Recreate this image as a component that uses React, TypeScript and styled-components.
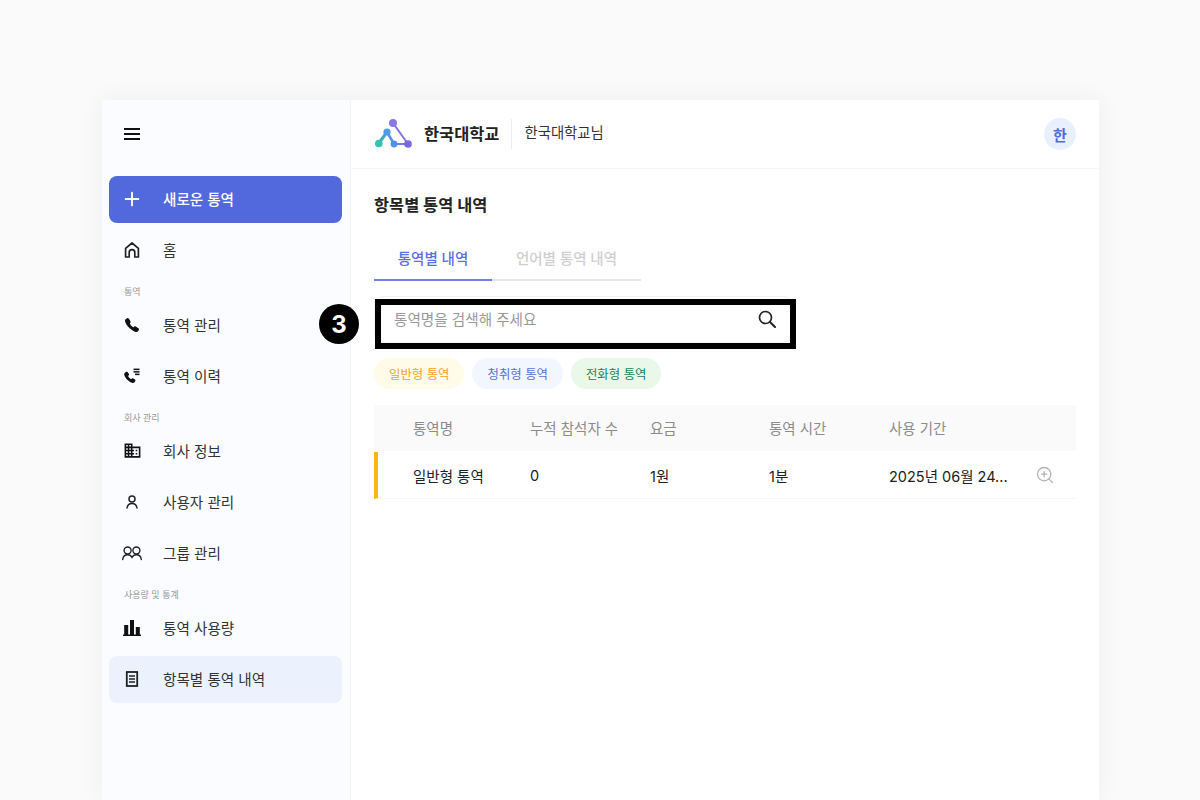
import styled, { createGlobalStyle } from "styled-components";
import { Plus, ZoomIn } from "lucide-react";
import { IoCall } from "react-icons/io5";
import { MdBusiness } from "react-icons/md";
import type { ReactNode } from "react";

const GlobalStyle = createGlobalStyle`
  html, body {
    margin: 0;
    height: 100%;
    background: #fafafa;
  }
  body {
    font-family: Inter, "Noto Sans CJK KR", "Noto Sans", sans-serif;
    overflow: hidden;
  }
  * { box-sizing: border-box; }
`;

const BurgerIcon = () => (
  <svg width="16" height="12" viewBox="0 0 16 12" fill="#111">
    <rect y="0" width="16" height="2" />
    <rect y="5" width="16" height="2" />
    <rect y="10" width="16" height="2" />
  </svg>
);

const HomeIcon = () => (
  <svg width="18" height="18" viewBox="0 0 18 18" fill="none" stroke="#222" strokeWidth="1.7" strokeLinejoin="round">
    <path d="M2.600 16V7.400L9 2l6.400 5.400V16h-3.600v-4.600a2.800 2.800 0 0 0-5.600 0V16z" />
  </svg>
);

const CallListIcon = () => (
  <svg width="18" height="18" viewBox="0 0 18 18" fill="#111">
    <path d="M2.900 5c.6-.5 1.300-.4 1.700.1l1.300 1.800c.3.500.2 1-.1 1.400l-.7.800c.6 1.300 1.600 2.400 2.900 3.100l.9-.7c.4-.3 1-.4 1.400-.1l1.700 1.200c.5.400.6 1.100.2 1.700l-.7.900c-.5.600-1.200.8-1.900.7C5.700 15 2.100 11.400 1.200 7.500c-.1-.7.100-1.400.7-1.800z" />
    <rect x="10.500" y="1.600" width="6" height="1.500" />
    <rect x="10.500" y="4.100" width="6" height="1.500" />
    <rect x="12" y="6.600" width="4.500" height="1.500" />
  </svg>
);

const PersonIcon = () => (
  <svg width="18" height="18" viewBox="0 0 18 18" fill="none" stroke="#222" strokeWidth="1.500" strokeLinecap="round">
    <circle cx="9" cy="6" r="3" />
    <path d="M4 15c.400-2.900 2.300-4.600 5-4.600s4.600 1.700 5 4.600" />
  </svg>
);

const GroupIcon = () => (
  <svg width="20" height="18" viewBox="0 0 20 18" fill="none" stroke="#222" strokeWidth="1.400" strokeLinecap="round">
    <circle cx="5.600" cy="6.500" r="3.500" />
    <circle cx="14.400" cy="6.500" r="3.500" />
    <path d="M.7 15.500c.4-3 2.200-4.800 4.900-4.800 2 0 3.500.9 4.400 2.600.9-1.700 2.400-2.600 4.400-2.600 2.700 0 4.500 1.800 4.900 4.800" />
  </svg>
);

const BarsIcon = () => (
  <svg width="18" height="18" viewBox="0 0 18 18" fill="#111">
    <rect x="1.200" y="6" width="4" height="10" />
    <rect x="7" y="1" width="4" height="15" />
    <rect x="12.800" y="8" width="4" height="8" />
    <rect x="0" y="15.500" width="18" height="1.500" />
  </svg>
);

const DocIcon = () => (
  <svg width="14" height="16" viewBox="0 0 14 16" fill="none" stroke="#222">
    <rect x="1.800" y="1" width="10.400" height="14" strokeWidth="1.800" />
    <path d="M4 5h6M4 8h6M4 11h6" strokeWidth="1.300" />
  </svg>
);

const SearchIcon = () => (
  <svg width="18" height="18" viewBox="0 0 18 18" fill="none" stroke="#222" strokeWidth="1.700" strokeLinecap="round">
    <circle cx="7.500" cy="7.500" r="6" />
    <path d="M12 12l5 5" strokeWidth="2" />
  </svg>
);

const LogoMark = () => (
  <svg width="40" height="36" viewBox="0 0 40 36" fill="none">
    <path d="M18 7l15 21" stroke="#8273e0" strokeWidth="2" />
    <path d="M12 16L4 27" stroke="#45a7c4" strokeWidth="3" />
    <path d="M12 16l7 12" stroke="#4f94ea" strokeWidth="2.500" />
    <path d="M19 28h14" stroke="#6a7de8" strokeWidth="2" />
    <circle cx="18" cy="7" r="4" fill="#8b78e2" />
    <circle cx="12" cy="16" r="3.600" fill="#4f9be6" />
    <circle cx="3.800" cy="27.500" r="3.800" fill="#37c2b0" />
    <circle cx="19" cy="28" r="3.400" fill="#4f8fee" />
    <circle cx="33" cy="28" r="3.800" fill="#7a64e0" />
  </svg>
);

type NavEntry =
  | { kind: "label"; text: string }
  | { kind: "item"; text: string; icon: ReactNode; active?: boolean };

const NAV: NavEntry[] = [
  { kind: "item", text: "홈", icon: <HomeIcon /> },
  { kind: "label", text: "통역" },
  { kind: "item", text: "통역 관리", icon: <IoCall size={16} color="#111" /> },
  { kind: "item", text: "통역 이력", icon: <CallListIcon /> },
  { kind: "label", text: "회사 관리" },
  { kind: "item", text: "회사 정보", icon: <MdBusiness size={19} color="#111" /> },
  { kind: "item", text: "사용자 관리", icon: <PersonIcon /> },
  { kind: "item", text: "그룹 관리", icon: <GroupIcon /> },
  { kind: "label", text: "사용량 및 통계" },
  { kind: "item", text: "통역 사용량", icon: <BarsIcon /> },
  { kind: "item", text: "항목별 통역 내역", icon: <DocIcon />, active: true },
];

const CHIPS = [
  { text: "일반형 통역", bg: "#fffbe8", fg: "#f5a02c" },
  { text: "청취형 통역", bg: "#f1f6ff", fg: "#5b70d8" },
  { text: "전화형 통역", bg: "#e9f8e9", fg: "#17855a" },
];

export default function App() {
  return (
    <>
      <GlobalStyle />
      <Page>
        <Card>
          <Sidebar>
            <MenuButton>
              <BurgerIcon />
            </MenuButton>
            <NewButton>
              <IconSlot>
                <Plus size={22} color="#fff" strokeWidth={2} />
              </IconSlot>
              새로운 통역
            </NewButton>
            {NAV.map((entry) =>
              entry.kind === "label" ? (
                <SectionLabel key={entry.text}>{entry.text}</SectionLabel>
              ) : (
                <NavItem key={entry.text} $active={entry.active}>
                  <IconSlot>{entry.icon}</IconSlot>
                  {entry.text}
                </NavItem>
              )
            )}
          </Sidebar>
          <Main>
            <Header>
              <LogoMark />
              <OrgName>한국대학교</OrgName>
              <UserName>한국대학교님</UserName>
              <Avatar>한</Avatar>
            </Header>
            <Content>
              <Title>항목별 통역 내역</Title>
              <Tabs>
                <Tab $active $w={118}>통역별 내역</Tab>
                <Tab $w={149}>언어별 통역 내역</Tab>
              </Tabs>
              <SearchWrap>
                <StepBadge>3</StepBadge>
                <SearchBox>
                  <SearchText>통역명을 검색해 주세요</SearchText>
                  <SearchIcon />
                </SearchBox>
                <Highlight />
              </SearchWrap>
              <Chips>
                {CHIPS.map((c) => (
                  <Chip key={c.text} $bg={c.bg} $fg={c.fg}>
                    {c.text}
                  </Chip>
                ))}
              </Chips>
              <HeadRow>
                <span>통역명</span>
                <span>누적 참석자 수</span>
                <span>요금</span>
                <span>통역 시간</span>
                <span>사용 기간</span>
              </HeadRow>
              <BodyRow>
                <span>일반형 통역</span>
                <span>0</span>
                <span>1원</span>
                <span>1분</span>
                <span>2025년 06월 24...</span>
                <ZoomIn size={20} color="#b4b4b4" strokeWidth={1.6} />
              </BodyRow>
            </Content>
          </Main>
        </Card>
      </Page>
    </>
  );
}

const Page = styled.div`
  height: 100vh;
  padding: 100px 101px 0 102px;
`;

const Card = styled.div`
  display: flex;
  height: 100%;
  background: #fff;
  box-shadow: 0 0 24px rgba(0, 0, 0, 0.05);
`;

const Sidebar = styled.aside`
  width: 249px;
  flex-shrink: 0;
  padding: 0 8px 0 7px;
  background: #fafcff;
  border-right: 1px solid #f1f2f5;
  display: flex;
  flex-direction: column;
  gap: 4px;
`;

const MenuButton = styled.div`
  height: 72px;
  padding: 0 0 4px 15px;
  display: flex;
  align-items: center;
`;

const IconSlot = styled.span`
  width: 54px;
  padding-right: 8px;
  flex-shrink: 0;
  display: flex;
  align-items: center;
  justify-content: center;
`;

const NewButton = styled.div`
  height: 47px;
  padding-bottom: 2px;
  border-radius: 8px;
  background: #5269dd;
  color: #fff;
  font-size: 14.6px;
  font-weight: 500;
  display: flex;
  align-items: center;
`;

const NavItem = styled.div<{ $active?: boolean }>`
  height: 47px;
  padding-bottom: 2px;
  border-radius: 8px;
  background: ${(p) => (p.$active ? "#ebf2fe" : "transparent")};
  color: #333;
  font-size: 14.6px;
  display: flex;
  align-items: center;
`;

const SectionLabel = styled.div`
  height: 20px;
  padding: 8px 0 0 15px;
  font-size: 9px;
  line-height: 12px;
  color: #999;
`;

const Main = styled.main`
  flex: 1;
  min-width: 0;
  display: flex;
  flex-direction: column;
`;

const Header = styled.header`
  height: 69px;
  padding: 0 23px 0 24px;
  border-bottom: 1px solid #f6f6f8;
  display: flex;
  align-items: center;
`;

const OrgName = styled.div`
  margin-left: 9px;
  padding: 0 12px 3px 0;
  font-size: 16.4px;
  font-weight: 700;
  color: #222;
`;

const UserName = styled.div`
  flex: 1;
  height: 30px;
  line-height: 28px;
  padding-left: 12px;
  border-left: 1px solid #ececec;
  font-size: 14.4px;
  color: #333;
`;

const Avatar = styled.div`
  width: 32px;
  height: 32px;
  border-radius: 50%;
  background: #e9f0fd;
  color: #5269dd;
  font-size: 15px;
  font-weight: 700;
  display: flex;
  align-items: center;
  justify-content: center;
`;

const Content = styled.section`
  flex: 1;
  padding: 25px 23px 0 23px;
`;

const Title = styled.h1`
  margin: 0;
  font-size: 16.400px;
  line-height: 23px;
  font-weight: 700;
  color: #222;
`;

const Tabs = styled.div`
  margin-top: 24px;
  display: flex;
`;

const Tab = styled.div<{ $active?: boolean; $w: number }>`
  width: ${(p) => p.$w}px;
  height: 40px;
  line-height: 35px;
  text-align: center;
  font-size: 14.5px;
  font-weight: 500;
  color: ${(p) => (p.$active ? "#5b70e0" : "#cfcfcf")};
  border-bottom: 2px solid ${(p) => (p.$active ? "#6f82e8" : "#e6e6e6")};
`;

const SearchWrap = styled.div`
  position: relative;
  width: 418px;
  margin-top: 15px;
`;

const SearchBox = styled.div`
  height: 47px;
  padding: 0 15px 2px 19px;
  border: 1px solid #f1f1f1;
  border-radius: 8px;
  background: #fff;
  display: flex;
  align-items: center;
  justify-content: space-between;
`;

const SearchText = styled.span`
  font-size: 14.6px;
  color: #999;
`;

const Highlight = styled.div`
  position: absolute;
  left: 1px;
  top: 3px;
  width: 421px;
  height: 50px;
  border: 6px solid #000;
`;

const StepBadge = styled.div`
  position: absolute;
  left: -55px;
  top: 8px;
  width: 40px;
  height: 40px;
  border-radius: 50%;
  background: #000;
  color: #fff;
  font-size: 24px;
  font-weight: 700;
  display: flex;
  align-items: center;
  justify-content: center;
`;

const Chips = styled.div`
  margin-top: 15px;
  display: flex;
  gap: 8px;
`;

const Chip = styled.div<{ $bg: string; $fg: string }>`
  height: 31px;
  padding: 0 15px;
  border-radius: 16px;
  background: ${(p) => p.$bg};
  color: ${(p) => p.$fg};
  font-size: 12.4px;
  display: flex;
  align-items: center;
`;

const HeadRow = styled.div`
  margin-top: 16px;
  height: 46px;
  padding: 0 0 1px 39px;
  background: #fafafa;
  color: #8c8c8c;
  font-size: 14.5px;
  display: grid;
  grid-template-columns: 117px 120px 119px 120px 1fr;
  align-items: center;
`;

const BodyRow = styled.div`
  margin-top: 1px;
  height: 47px;
  padding-left: 35px;
  padding-right: 21px;
  border-left: 4px solid #fdb913;
  border-bottom: 1px solid #f6f6f6;
  color: #222;
  font-size: 14.5px;
  display: grid;
  grid-template-columns: 117px 120px 119px 120px 1fr 20px;
  align-items: center;
`;
